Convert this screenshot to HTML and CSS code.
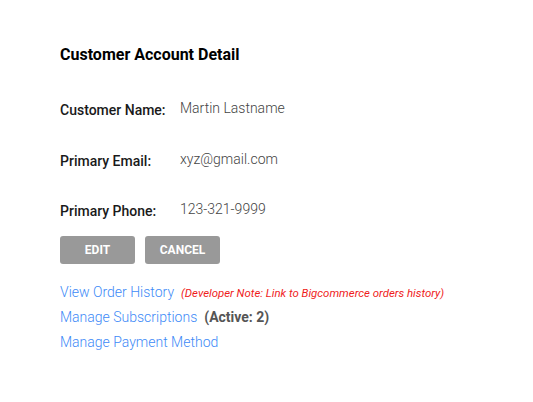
FILE: index.html
```html
<!DOCTYPE html>
<html>
<head>
<meta charset="utf-8">
<link rel="stylesheet" href="styles.css">
</head>
<body>
<div class="page">
  <h1 class="title">Customer Account Detail</h1>
  <div class="fields">
    <div class="row"><span class="label">Customer Name:</span><span class="value">Martin Lastname</span></div>
    <div class="row"><span class="label">Primary Email:</span><span class="value">xyz@gmail.com</span></div>
    <div class="row"><span class="label">Primary Phone:</span><span class="value">123-321-9999</span></div>
  </div>
  <div class="buttons">
    <button class="btn">EDIT</button>
    <button class="btn">CANCEL</button>
  </div>
  <div class="links">
    <div class="link-row"><a class="link" href="#">View Order History</a><span class="note">(Developer Note: Link to Bigcommerce orders history)</span></div>
    <div class="link-row"><a class="link" href="#">Manage Subscriptions</a><span class="active">(Active: 2)</span></div>
    <div class="link-row"><a class="link" href="#">Manage Payment Method</a></div>
  </div>
</div>
</body>
</html>
```
FILE: styles.css
```css
html, body {
  margin: 0;
  padding: 0;
  background: #fff;
}
body {
  font-family: Roboto, "Liberation Sans", sans-serif;
}
.page {
  padding: 46px 0 0 60px;
}
.title {
  margin: 0;
  font-size: 16px;
  font-weight: 700;
  line-height: 18px;
  color: #000;
}
.fields {
  margin-top: 36px;
  display: flex;
  flex-direction: column;
  gap: 32.5px;
}
.row {
  display: flex;
  align-items: flex-start;
  height: 18px;
}
.label {
  width: 120px;
  font-size: 14px;
  font-weight: 500;
  line-height: 18px;
  color: #1a1a1a;
  padding-top: 1px;
}
.value {
  font-size: 14px;
  font-weight: 300;
  line-height: 18px;
  color: #444;
  margin-top: -1px;
}
.buttons {
  margin-top: 17px;
  display: flex;
  gap: 10px;
}
.btn {
  width: 75px;
  height: 28px;
  border: none;
  border-radius: 3px;
  background: #999;
  color: #fff;
  font-family: Roboto, "Liberation Sans", sans-serif;
  font-size: 12px;
  font-weight: 700;
  padding: 0;
}
.links {
  margin-top: 19px;
  display: flex;
  flex-direction: column;
  gap: 6.3px;
}
.link-row {
  display: flex;
  align-items: baseline;
  line-height: 18px;
}
.link {
  font-size: 14px;
  font-weight: 300;
  color: #3d8af7;
  text-decoration: none;
}
.note {
  margin-left: 7px;
  font-size: 11.4px;
  font-style: italic;
  color: #ef1c1c;
}
.active {
  margin-left: 7px;
  font-size: 14px;
  font-weight: 700;
  color: #555;
}
```
